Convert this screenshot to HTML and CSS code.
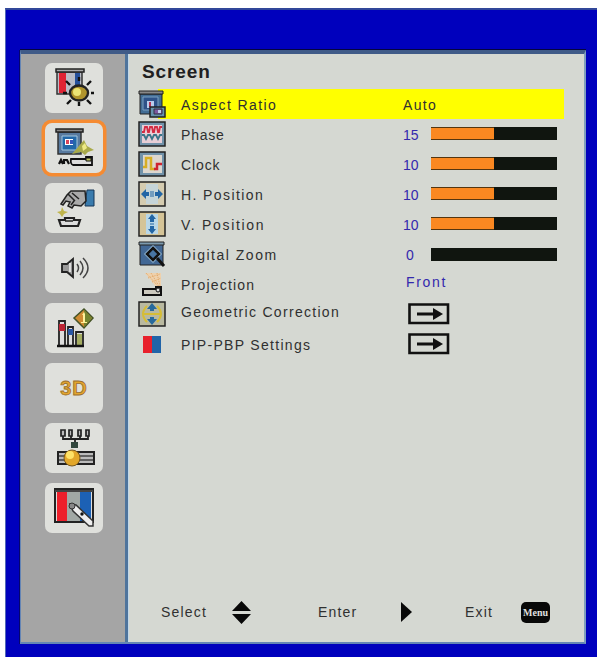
FILE: index.html
```
<!DOCTYPE html>
<html lang="en">
<head>
  <meta charset="utf-8">
  <title>Screen</title>
  <link rel="stylesheet" href="styles.css">
</head>
<body>
  <div class="osd">
    <div class="panel">
      <nav class="sidebar">
        <div class="tab">
          <svg viewBox="0 0 58 50">
            <path d="M12 9H37V31H12Z" fill="#b9bcc6" stroke="#333" stroke-width="1.5"/>
            <path d="M14 10H21V30H14Z" fill="#df2334"/>
            <path d="M30 10H35V23H30Z" fill="#25509b"/>
            <path d="M11 6H39V9H11Z" fill="#aaa" stroke="#222" stroke-width="1.5"/>
            <path d="M34 18V14M34 39V43M22 30H18M46 30H49M25 22L21 18M42 22L46 18M26 37L22 41M42 37L46 41" stroke="#111" stroke-width="2.4"/>
            <ellipse cx="34" cy="30" rx="9" ry="7.5" fill="#b0942c" stroke="#222" stroke-width="2.4"/>
            <circle cx="32" cy="29" r="4" fill="#ece474"/>
          </svg>
        </div>
        <div class="tab active">
          <svg viewBox="0 0 58 50">
            <path d="M13 9H36V31H13Z" fill="#587a9f" stroke="#333" stroke-width="1.5"/>
            <path d="M17 13H32V27H17Z" fill="#2368a8" stroke="#a5c8df"/>
            <path d="M20 16H28V22H20Z" fill="#fff"/>
            <path d="M21 17H24V21H21Z" fill="#d9445a"/>
            <path d="M25 17H28V21H25Z" fill="#3555bb"/>
            <path d="M11 6H38V9H11Z" fill="#888" stroke="#222" stroke-width="1.5"/>
            <path d="M39 17L42 23L49 27L43 29L40 32L36 29L27 31L33 24Z" fill="#a9aa4a"/>
            <path d="M37 23L40 20L42 25L38 28Z" fill="#eeea85"/>
            <path d="M26 36H41V34H47V42H28Q25 41 26 36Z" fill="#ddd" stroke="#111" stroke-width="1.8"/>
            <path d="M41 35H46V38H41Z" fill="#c5ca65" stroke="#111"/>
            <path d="M14 41L16 37L18 41M19 41V37L22 37L24 41" fill="none" stroke="#111" stroke-width="2.2"/>
          </svg>
        </div>
        <div class="tab">
          <svg viewBox="0 0 58 50">
            <path d="M42 7H49V23H40Z" fill="#397bad" stroke="#173756"/>
            <path d="M16 21L22 12L26 8H40L41 18L36 23L29 22L27 25L23 23L25 19L21 18L18 22Z" fill="#aaa" stroke="#222" stroke-width="1.5"/>
            <path d="M23 11L30 18M27 10L34 16M29 18L26 22" fill="none" stroke="#222" stroke-width="1.5"/>
            <path d="M17 24L19 28L23 29L19 31L17 34L15 31L12 29L16 28Z" fill="#c0b54c"/>
            <path d="M14 37H20V35H29V37H35L33 43H16Z" fill="#ddd" stroke="#222" stroke-width="2.2"/>
            <path d="M20 38H28" stroke="#222" stroke-width="1.5"/>
          </svg>
        </div>
        <div class="tab">
          <svg viewBox="0 0 58 50">
            <path d="M17 21H22L28 16V34L22 29H17Z" fill="#999" stroke="#222" stroke-width="1.8"/>
            <path d="M25 20V29" stroke="#ddd" stroke-width="2"/>
            <path d="M32 21Q35 25 32 29M35 18Q41 25 35 32M38 15Q48 25 38 35" fill="none" stroke="#444" stroke-width="1.5"/>
          </svg>
        </div>
        <div class="tab">
          <svg viewBox="0 0 58 50">
            <path d="M14 18H20V43H14ZM23 24H28V43H23ZM31 29H38V43H31Z" fill="#ddd" stroke="#222" stroke-width="1.8"/>
            <path d="M14 21H20V28H14Z" fill="#bd2434"/>
            <path d="M23 26H28V32H23Z" fill="#2a57a4"/>
            <path d="M32 31H37V42H32Z" fill="#a4ac61"/>
            <path d="M12 43H39" stroke="#111" stroke-width="2.5"/>
            <path d="M39 6L48 15L39 25L29 15Z" fill="#cf8b32" stroke="#445326" stroke-width="1.5"/>
            <path d="M39 7L47 15L39 24Z" fill="#73852f"/>
            <path d="M37 12L39 9L40 11V19H42V20H36V19H38V12Z" fill="#fff19a"/>
          </svg>
        </div>
        <div class="tab"><span class="three-d">3D</span></div>
        <div class="tab">
          <svg viewBox="0 0 58 50">
            <path d="M18 13V16H43V13M26 13V16M35 13V16M30 17V25" fill="none" stroke="#222" stroke-width="1.8"/>
            <path d="M16 7H20V13H16ZM24 7H27V13H24ZM33 7H36V13H33ZM41 7H44V13H41Z" fill="#bbb" stroke="#222" stroke-width="1.7"/>
            <path d="M26 19H33V25H26Z" fill="#30463c"/>
            <path d="M13 29H49V41H13Z" fill="#bbb" stroke="#222" stroke-width="2"/>
            <path d="M14 33H48M14 37H48" stroke="#444" stroke-width="1.5"/>
            <circle cx="27" cy="35" r="8" fill="#e2a72a" stroke="#7a591d"/>
            <circle cx="25" cy="32" r="4" fill="#fee267"/>
          </svg>
        </div>
        <div class="tab">
          <svg viewBox="0 0 58 50">
            <path d="M10 6H48V39H10Z" fill="#ddd" stroke="#222" stroke-width="2"/>
            <path d="M12 9H22V38H12Z" fill="#ed1f2b"/>
            <path d="M22 9H35V38H22Z" fill="#a1a8a5"/>
            <path d="M35 9H46V38H35Z" fill="#1c61b5"/>
            <path d="M10 8H48" stroke="#444" stroke-width="2"/>
            <path d="M25 21L31 22L48 38V43L44 43L28 28Z" fill="#eee" stroke="#333" stroke-width="1.5"/>
            <circle cx="27" cy="23" r="3" fill="#888" stroke="#333"/>
            <circle cx="37" cy="31" r="1.7" fill="#111"/>
          </svg>
        </div>
      </nav>

      <main class="content">
        <h1>Screen</h1>
        <ul class="menu">
          <li class="row selected">
            <svg class="icon" viewBox="0 0 28 28">
              <path d="M2 4H24V24H2Z" fill="#426d94" stroke="#222"/>
              <path d="M5 7H20V20H5Z" fill="#2e5288" stroke="#7aa1c2"/>
              <path d="M9 11H16V18H9Z" fill="#b9cdec"/>
              <path d="M11 12H13V17H11Z" fill="#b43355"/>
              <path d="M1 1H25V4H1Z" fill="#888" stroke="#222"/>
              <path d="M12 17H27V27H12Z" fill="#6591ad" stroke="#222" stroke-width="1.5"/>
              <path d="M16 19H24V24H16Z" fill="#7d589e" stroke="#334"/>
              <path d="M20 20H23V23H20Z" fill="#bed1ed"/>
            </svg>
            <span class="label aspect">Aspect Ratio</span>
            <span class="value">Auto</span>
          </li>
          <li class="row">
            <svg class="icon" viewBox="0 0 28 28">
              <path d="M1 2H27V26H1Z" fill="#7192a9" stroke="#222" stroke-width="1.5"/>
              <path d="M4 5H24V23H4Z" fill="#e7ced6"/>
              <path d="M4 12H6L7 7H9L10 12H11L12 7H14L15 12H16L17 7H19L20 12H21L22 7H24" fill="none" stroke="#d32b42" stroke-width="1.8"/>
              <path d="M4 15H6L8 19L10 15H12L14 19L16 15H18L20 19L22 15H24" fill="none" stroke="#397488" stroke-width="1.8"/>
            </svg>
            <span class="label phase">Phase</span>
            <span class="value">15</span>
            <span class="bar"><span class="fill" style="width: 50%"></span></span>
          </li>
          <li class="row">
            <svg class="icon" viewBox="0 0 28 28">
              <path d="M1 2H27V26H1Z" fill="#7192a9" stroke="#222" stroke-width="1.5"/>
              <path d="M5 5H24V23H5Z" fill="#ddd7cf"/>
              <path d="M5 17H8V8H13V19H17" fill="none" stroke="#d7ae25" stroke-width="2.5"/>
              <path d="M16 19H19V14H24" fill="none" stroke="#cf2532" stroke-width="2.5"/>
            </svg>
            <span class="label clock">Clock</span>
            <span class="value">10</span>
            <span class="bar"><span class="fill" style="width: 50%"></span></span>
          </li>
          <li class="row">
            <svg class="icon" viewBox="0 0 28 28">
              <path d="M1 2H27V26H1Z" fill="#d5ccb0" stroke="#222" stroke-width="1.5"/>
              <path d="M8 4H20V24H8Z" fill="#c5d4d8"/>
              <path d="M3 14L8 9V12H11V16H8V19ZM25 14L20 9V12H17V16H20V19Z" fill="#2366a5"/>
              <path d="M13 11V17M15 11V17" stroke="#2366a5"/>
            </svg>
            <span class="label hpos">H. Position</span>
            <span class="value">10</span>
            <span class="bar"><span class="fill" style="width: 50%"></span></span>
          </li>
          <li class="row">
            <svg class="icon" viewBox="0 0 28 28">
              <path d="M1 2H27V26H1Z" fill="#d5c497" stroke="#222" stroke-width="1.5"/>
              <path d="M8 4H20V24H8Z" fill="#b9d7e7"/>
              <path d="M14 4L18 9H16V12H12V9H10ZM14 24L18 19H16V16H12V19H10Z" fill="#2366a5"/>
              <path d="M12 14H16" stroke="#2366a5"/>
            </svg>
            <span class="label vpos">V. Position</span>
            <span class="value">10</span>
            <span class="bar"><span class="fill" style="width: 50%"></span></span>
          </li>
          <li class="row">
            <svg class="icon" viewBox="0 0 28 28">
              <path d="M2 4H25V25H2Z" fill="#426895" stroke="#222"/>
              <path d="M1 2H26V5H1Z" fill="#7c9aae" stroke="#222"/>
              <path d="M15 5L24 14L15 23L6 14Z" fill="#91b7d5"/>
              <path d="M15 8L21 14L15 20L9 14Z" fill="#4775a4" stroke="#111" stroke-width="2.5"/>
              <path d="M19 18L26 26" stroke="#111" stroke-width="3"/>
            </svg>
            <span class="label zoom">Digital Zoom</span>
            <span class="value narrow">0</span>
            <span class="bar low"></span>
          </li>
          <li class="row">
            <svg class="icon" viewBox="0 0 28 28">
              <path d="M7 3H23V17L18 17Z" fill="#eed1ad"/>
              <path d="M8 3L20 16M13 3L21 16M19 3L22 16M10 8L22 4M14 12L23 8" stroke="#e3a765" stroke-dasharray="1 1"/>
              <path d="M5 19H18V17H23V25H5Z" fill="#ccc9be" stroke="#111" stroke-width="2"/>
              <circle cx="20" cy="20" r="2" fill="#ddd" stroke="#111"/>
            </svg>
            <span class="label projection">Projection</span>
            <span class="value front">Front</span>
          </li>
          <li class="row raised">
            <svg class="icon" viewBox="0 0 28 28">
              <path d="M1 2H27V26H1Z" fill="#b9b9a0" stroke="#222" stroke-width="1.5"/>
              <path d="M9 6Q1 14 9 22M19 6Q27 14 19 22M5 14H23" fill="none" stroke="#d6bd35" stroke-width="2"/>
              <path d="M14 3L19 9H16V11H12V9H9ZM14 25L19 19H16V17H12V19H9Z" fill="#286a9c"/>
            </svg>
            <span class="label geometric">Geometric Correction</span>
            <svg class="enter" viewBox="0 0 42 22">
              <path d="M1.5 1.5H40V20H1.5Z" fill="none" stroke="#111" stroke-width="2.6"/>
              <path d="M9 11H27" stroke="#111" stroke-width="3"/>
              <path d="M25 5L35 11L25 17Z" fill="#111"/>
            </svg>
          </li>
          <li class="row">
            <svg class="icon" viewBox="0 0 28 28">
              <path d="M5 6H14V23H5Z" fill="#e8202c"/>
              <path d="M14 6H23V23H14Z" fill="#2164a8"/>
            </svg>
            <span class="label pip">PIP-PBP Settings</span>
            <svg class="enter" viewBox="0 0 42 22">
              <path d="M1.5 1.5H40V20H1.5Z" fill="none" stroke="#111" stroke-width="2.6"/>
              <path d="M9 11H27" stroke="#111" stroke-width="3"/>
              <path d="M25 5L35 11L25 17Z" fill="#111"/>
            </svg>
          </li>
        </ul>

        <footer class="hints">
          <span class="select">Select</span>
          <svg class="updown" viewBox="0 0 19 23"><path d="M9.500 0L19 10H0ZM0 13H19L9.500 23Z"/></svg>
          <span class="enter-hint">Enter</span>
          <svg class="right" viewBox="0 0 11 20"><path d="M0 0L11 10L0 20Z"/></svg>
          <span class="exit">Exit</span>
          <span class="menu-key">Menu</span>
        </footer>
      </main>
    </div>
  </div>
</body>
</html>
```
FILE: styles.css
```
* {
  box-sizing: border-box;
}

body {
  margin: 0;
  height: 657px;
  padding: 8px 1px 0 5px;
  overflow: hidden;
  background: #fff;
  font-family: "Liberation Sans", Arial, sans-serif;
  font-size: 14px;
  color: #303030;
}

.osd {
  height: 649px;
  padding: 40px 11px 13px 14px;
  background: #0000bd;
  border-left: 1px solid #5269b5;
  border-top: 2px solid #31479a;
}

.panel {
  display: flex;
  height: 594px;
  border: 1px solid #6485b5;
  border-top: 4px solid #405b88;
  border-right: 2px solid #7f9fbd;
  border-bottom: 2px solid #6485b5;
  box-shadow: 0 -1px 0 #05053f, -1px 0 0 #05056d;
}

.sidebar {
  display: flex;
  flex-direction: column;
  gap: 10px;
  width: 107px;
  padding: 9px 0 0 24px;
  background: #a5a5a5;
  border-right: 3px solid #4f749c;
}

.tab {
  display: flex;
  align-items: center;
  justify-content: center;
  flex: none;
  width: 58px;
  height: 50px;
  border-radius: 7px;
  background: #dfe0dc;
}

.tab.active {
  box-shadow: 0 0 0 3.5px #f58b32;
}

.tab svg {
  width: 58px;
  height: 50px;
}

.three-d {
  color: #e3a52e;
  font-size: 20px;
  font-weight: bold;
  line-height: 20px;
  letter-spacing: 1px;
  -webkit-text-stroke: 0.8px #9a6e2e;
}

.content {
  display: flex;
  flex-direction: column;
  flex: 1;
  padding: 5px 20px 0 9px;
  background: #d5d8d2;
  border-left: 1px solid #c2d8e8;
}

h1 {
  margin: 0;
  padding-left: 4px;
  height: 30px;
  font-size: 19px;
  line-height: 25px;
  letter-spacing: 0.9px;
  color: #202020;
}

.menu {
  margin: 0;
  padding: 0;
  list-style: none;
}

.row {
  display: flex;
  align-items: center;
  height: 30px;
}

.row.selected {
  background: linear-gradient(90deg, #d5d8d2 20px, #ff0 20px);
}

.icon {
  width: 28px;
  height: 28px;
}

.label {
  width: 222px;
  padding-left: 15px;
  white-space: nowrap;
  line-height: 30px;
  padding-top: 2px;
}

.raised .label {
  padding-top: 0;
  line-height: 27px;
  height: 30px;
}

.aspect { letter-spacing: 1.4px; }
.phase { letter-spacing: 0.8px; }
.clock { letter-spacing: 0.9px; }
.hpos { letter-spacing: 1.4px; }
.vpos { letter-spacing: 1.7px; }
.zoom { letter-spacing: 1.5px; }
.projection { letter-spacing: 1.2px; }
.geometric { letter-spacing: 1.3px; }
.pip { letter-spacing: 1.3px; }

.value {
  width: 43px;
  padding: 2px 0 0 15px;
  color: #3429ad;
}

.selected .value {
  color: #303030;
  letter-spacing: 1.3px;
}

.narrow {
  padding-left: 18px;
}

.front {
  padding-left: 18px;
  letter-spacing: 1.7px;
  padding-bottom: 6px;
}

.bar {
  width: 126px;
  height: 13px;
  margin-bottom: 2px;
  background: #10150f;
}

.bar.low {
  margin-bottom: 0;
}

.fill {
  display: block;
  height: 13px;
  background: #fa8821;
  border-top: 1px solid #54350f;
  border-bottom: 1px solid #54350f;
}

.enter {
  width: 42px;
  height: 22px;
  margin-left: 20px;
}

.hints {
  display: flex;
  align-items: center;
  height: 24px;
  margin: auto 0 18px 23px;
}

.hints span {
  letter-spacing: 1.2px;
}

.hints svg {
  fill: #080808;
}

.hints .select {
  width: 71px;
}

.updown {
  width: 19px;
  height: 23px;
}

.hints .enter-hint {
  width: 83px;
  margin-left: 67px;
}

.right {
  width: 11px;
  height: 20px;
}

.hints .exit {
  width: 56px;
  margin-left: 53px;
}

.hints .menu-key {
  width: 29px;
  height: 21px;
  border-radius: 5px;
  background: #080808;
  color: #e0e0e0;
  font-family: "Liberation Serif", serif;
  font-size: 10px;
  font-weight: bold;
  line-height: 21px;
  letter-spacing: 0;
  text-align: center;
}
```
